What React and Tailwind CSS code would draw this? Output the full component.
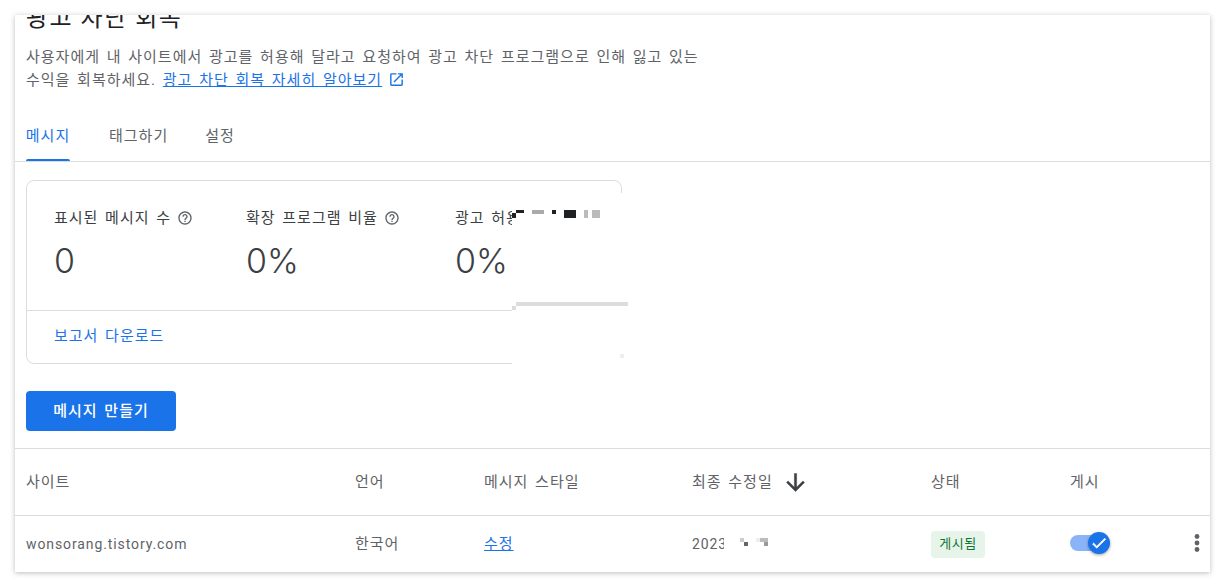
const BODY = "text-[15px] tracking-[1px] [word-spacing:2px]";

function HelpIcon() {
  return (
    <svg width="16" height="16" viewBox="0 0 24 24" fill="#5f6368">
      <path d="M11 18h2v-2h-2v2zm1-16C6.48 2 2 6.48 2 12s4.48 10 10 10 10-4.48 10-10S17.52 2 12 2zm0 18c-4.41 0-8-3.59-8-8s3.59-8 8-8 8 3.59 8 8-3.59 8-8 8zm0-14c-2.21 0-4 1.79-4 4h2c0-1.1.9-2 2-2s2 .9 2 2c0 2-3 1.75-3 5h2c0-2.25 3-2.5 3-5 0-2.21-1.79-4-4-4z" />
    </svg>
  );
}

function Stat({ label, value, help = true, width }) {
  return (
    <div className={width}>
      <div className={"flex h-[20px] items-center gap-[6px] whitespace-nowrap text-[#3c4043] " + BODY}>
        <span>{label}</span>
        {help && <HelpIcon />}
      </div>
      <div className="mt-[11px] h-[44px] font-['Inter'] text-[34px] font-light leading-[44px] text-[#3c4043]">
        {value}
      </div>
    </div>
  );
}

function Smudge({ className }) {
  return <div className={"absolute " + className} />;
}

export default function App() {
  return (
    <div className="h-[586px] overflow-hidden bg-white px-[15px] pt-[15px] font-['Roboto','Noto_Sans_CJK_KR',sans-serif]">
      <div className="relative h-[557px] overflow-hidden bg-white shadow-[0_1px_5px_rgba(60,64,67,0.35)]">
        {/* header */}
        <div className="px-[11px]">
          <h1 className="-mt-[13px] h-[32px] text-[24px] leading-[32px] tracking-[1.5px] text-[#202124]">광고 차단 회복</h1>
          <p className={"mt-[12px] w-[720px] whitespace-nowrap leading-[23px] text-[#5f6368] " + BODY}>
            사용자에게 내 사이트에서 광고를 허용해 달라고 요청하여 광고 차단 프로그램으로 인해 잃고 있는
            <br />
            수익을 회복하세요.{" "}
            <a className="text-[#1a73e8] underline">광고 차단 회복 자세히 알아보기</a>
            <svg width="17" height="17" viewBox="0 0 24 24" fill="#1a73e8" className="ml-[6px] inline align-[-3px]">
              <path d="M19 19H5V5h7V3H5a2 2 0 0 0-2 2v14a2 2 0 0 0 2 2h14c1.1 0 2-.9 2-2v-7h-2v7zM14 3v2h3.59l-9.83 9.83 1.41 1.41L19 6.41V10h2V3h-7z" />
            </svg>
          </p>
        </div>

        {/* tabs */}
        <div className={"mt-[17px] flex h-[53px] border-b border-[#dadce0] px-[11px] " + BODY}>
          <div className="relative flex w-[44px] items-center justify-center whitespace-nowrap pt-[2px] text-[#1a73e8]">
            메시지
            <div className="absolute bottom-0 left-0 right-0 h-[2px] rounded-t bg-[#1a73e8]" />
          </div>
          <div className="ml-[39px] flex items-center pt-[2px] text-[#5f6368]">태그하기</div>
          <div className="ml-[37px] flex items-center pt-[2px] text-[#5f6368]">설정</div>
        </div>

        {/* stats card */}
        <div className="relative ml-[11px] mt-[18px] w-[596px] rounded-[8px] border border-[#dadce0]">
          <div className="flex h-[130px] border-b border-[#dadce0] pl-[27px] pt-[27px]">
            <Stat label="표시된 메시지 수" value="0" width="w-[192px]" />
            <Stat label="확장 프로그램 비율" value="0%" width="w-[209px]" />
            <Stat label="광고 허용 비율" value="0%" help={false} width="w-[120px]" />
          </div>
          <div className={"flex h-[52px] items-center pb-[2px] pl-[27px] text-[#1a73e8] " + BODY}>보고서 다운로드</div>
        </div>

        {/* button */}
        <button className={"ml-[11px] mt-[27px] flex h-[40px] w-[150px] items-center justify-center rounded-[4px] bg-[#1a73e8] font-medium text-white " + BODY}>
          메시지 만들기
        </button>

        {/* table */}
        <div className={"mt-[17px] flex h-[68px] items-center border-y border-[#dadce0] text-[#5f6368] " + BODY}>
          <div className="w-[340px] pl-[11px]">사이트</div>
          <div className="w-[129px]">언어</div>
          <div className="w-[208px]">메시지 스타일</div>
          <div className="flex w-[239px] items-center gap-[9px]">
            최종 수정일
            <svg width="27" height="27" viewBox="0 0 24 24" fill="#3c4043" stroke="#3c4043" strokeWidth="0.4">
              <path d="M20 12l-1.41-1.41L13 16.17V4h-2v12.17l-5.58-5.59L4 12l8 8 8-8z" />
            </svg>
          </div>
          <div className="w-[139px]">상태</div>
          <div>게시</div>
        </div>
        <div className={"flex h-[56px] items-center text-[#5f6368] " + BODY}>
          <div className="w-[340px] pl-[11px] text-[14px] tracking-[0.9px]">wonsorang.tistory.com</div>
          <div className="w-[129px]">한국어</div>
          <div className="w-[208px]">
            <a className="text-[#1a73e8] underline">수정</a>
          </div>
          <div className="w-[239px] text-[14px] tracking-[0.9px]">2023</div>
          <div className="w-[139px]">
            <span className="inline-flex h-[27px] w-[54px] items-center justify-center rounded-[4px] bg-[#e6f4ea] text-[13px] tracking-[0.5px] text-[#137333]">
              게시됨
            </span>
          </div>
          <div className="relative h-[20px] w-[40px]">
            <div className="absolute left-0 top-[1px] h-[16px] w-[30px] rounded-full bg-[#8ab4f8]" />
            <div className="absolute left-[18px] top-[-2px] flex h-[22px] w-[22px] items-center justify-center rounded-full bg-[#1a73e8] shadow-[0_1px_3px_rgba(60,64,67,0.5)]">
              <svg width="18" height="18" viewBox="0 0 24 24" fill="white" stroke="white" strokeWidth="0.8">
                <path d="M9 16.17L4.83 12l-1.42 1.41L9 19 21 7l-1.41-1.41z" />
              </svg>
            </div>
          </div>
          <svg width="24" height="24" viewBox="0 0 24 24" fill="#5f6368" className="ml-[75px] -translate-y-[1px]">
            <circle cx="12" cy="5.5" r="2.4" />
            <circle cx="12" cy="12" r="2.4" />
            <circle cx="12" cy="18.5" r="2.4" />
          </svg>
        </div>

        {/* masked-out patches in the screenshot */}
        <Smudge className="left-[497px] top-[178px] h-[177px] w-[116px] bg-white" />
        <Smudge className="left-[501px] top-[195px] h-[3px] w-[8px] bg-[#202124]" />
        <Smudge className="left-[497px] top-[198px] h-[5px] w-[4px] bg-[#202124]" />
        <Smudge className="left-[517px] top-[195px] h-[4px] w-[12px] bg-[#aaaaaa]" />
        <Smudge className="left-[537px] top-[195px] h-[4px] w-[4px] bg-[#202124]" />
        <Smudge className="left-[549px] top-[195px] h-[8px] w-[12px] bg-[#202124]" />
        <Smudge className="left-[569px] top-[195px] h-[8px] w-[4px] bg-[#bbbbbb]" />
        <Smudge className="left-[577px] top-[195px] h-[8px] w-[8px] bg-[#bbbbbb]" />
        <Smudge className="left-[501px] top-[287px] h-[4px] w-[112px] bg-[#dadce0]" />
        <Smudge className="left-[497px] top-[291px] h-[4px] w-[4px] bg-[#dadce0]" />
        <Smudge className="left-[605px] top-[339px] h-[4px] w-[4px] bg-[#eeeeee]" />
        <Smudge className="left-[709px] top-[520px] h-[20px] w-[40px] bg-white" />
        <Smudge className="left-[725px] top-[523px] h-[4px] w-[4px] bg-[#cccccc]" />
        <Smudge className="left-[729px] top-[527px] h-[4px] w-[4px] bg-[#666666]" />
        <Smudge className="left-[741px] top-[523px] h-[4px] w-[4px] bg-[#eeeeee]" />
        <Smudge className="left-[745px] top-[523px] h-[4px] w-[8px] bg-[#bbbbbb]" />
        <Smudge className="left-[749px] top-[527px] h-[4px] w-[4px] bg-[#999999]" />
      </div>
    </div>
  );
}
